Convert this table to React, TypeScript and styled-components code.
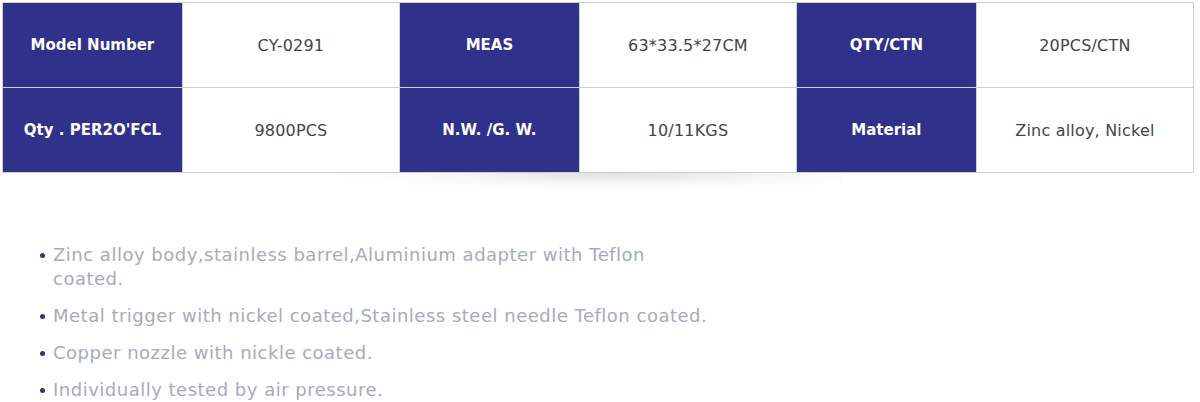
import React from 'react';
import styled, { createGlobalStyle } from 'styled-components';

const GlobalStyle = createGlobalStyle`
  html, body {
    margin: 0;
    padding: 0;
    background: #fff;
  }
  body {
    font-family: "DejaVu Sans", "Open Sans", sans-serif;
  }
`

const Page = styled.div`
  width: 1200px;
  height: 402px;
  overflow: hidden;
  padding: 2px 0 0 2px;
  box-sizing: border-box;
`

const TableWrap = styled.div`
  position: relative;
  width: 1192px;
`

const Shadow = styled.div`
  position: absolute;
  left: 240px;
  top: 170px;
  width: 600px;
  height: 22px;
  background: radial-gradient(ellipse 48% 90% at 62% 0%, rgba(0, 0, 0, 0.13), rgba(0, 0, 0, 0.03) 60%, rgba(0, 0, 0, 0) 100%);
  z-index: 0;
`

const SpecTable = styled.table`
  position: relative;
  z-index: 1;
  width: 100%;
  border-collapse: collapse;
  table-layout: fixed;
  border: 1px solid #cfcfcf;
`

const Cell = styled.td<{ $head?: boolean }>`
  height: 84px;
  padding: 0 6px;
  border: 1px solid #cfcfcf;
  text-align: center;
  vertical-align: middle;
  font-size: ${p => (p.$head ? '15px' : '16px')};
  letter-spacing: ${p => (p.$head ? '0' : '0.2px')};
  background: ${p => (p.$head ? '#2f318a' : '#fff')};
  color: ${p => (p.$head ? '#fff' : '#444')};
  font-weight: ${p => (p.$head ? 600 : 400)};
  width: ${p => (p.$head ? '15%' : '18.33%')};
`

const Features = styled.ul`
  list-style: none;
  margin: 70px 0 0 38px;
  padding: 0;
  width: 677px;
`

const Feature = styled.li`
  position: relative;
  padding-left: 13px;
  margin-bottom: 13px;
  font-size: 18px;
  letter-spacing: 0.5px;
  line-height: 24px;
  color: #a6aac2;

  &::before {
    content: '';
    position: absolute;
    left: 0;
    top: 10px;
    width: 5px;
    height: 5px;
    border-radius: 50%;
    background: #2f318a;
  }
`

const rows: [string, string][][] = [
  [
    ['Model Number', 'CY-0291'],
    ['MEAS', '63*33.5*27CM'],
    ['QTY/CTN', '20PCS/CTN'],
  ],
  [
    ["Qty . PER2O'FCL", '9800PCS'],
    ['N.W. /G. W.', '10/11KGS'],
    ['Material', 'Zinc alloy, Nickel'],
  ],
]

const features = [
  'Zinc alloy body,stainless barrel,Aluminium adapter with Teflon coated.',
  'Metal trigger with nickel coated,Stainless steel needle Teflon coated.',
  'Copper nozzle with nickle coated.',
  'Individually tested by air pressure.',
]

const App = () => {
  return (
    <Page>
      <GlobalStyle />
      <TableWrap>
        <Shadow />
        <SpecTable>
          <tbody>
            {rows.map((row, i) => (
              <tr key={i}>
                {row.map(([label, value]) => (
                  <React.Fragment key={label}>
                    <Cell $head>{label}</Cell>
                    <Cell>{value}</Cell>
                  </React.Fragment>
                ))}
              </tr>
            ))}
          </tbody>
        </SpecTable>
      </TableWrap>
      <Features>
        {features.map(f => (
          <Feature key={f}>{f}</Feature>
        ))}
      </Features>
    </Page>
  );
};

export default App
